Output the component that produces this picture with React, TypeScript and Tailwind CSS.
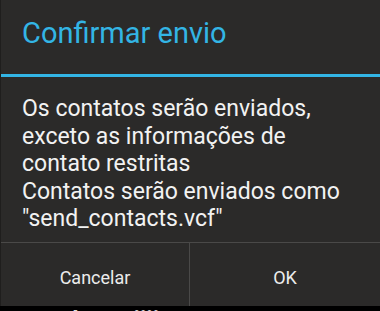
export default function App() {
  return (
    <div
      className="w-[380px] h-[311px] bg-black overflow-hidden flex flex-col"
      style={{ fontFamily: "Roboto, 'Noto Sans', sans-serif" }}
    >
      <div className="h-[306px] shrink-0 bg-[#2b2a29] border-l border-[#1f1e1d] flex flex-col">
        <div className="h-[74px] pl-[21px] pt-[19px]">
          <h1 className="text-[29px] leading-none text-[#33b5e5]">Confirmar envio</h1>
        </div>
        <div className="h-[3px] bg-[#33b5e5]" />
        <div className="flex-1 pl-[21px] pt-[18px] text-[23px] leading-[27.5px] text-[#f2f2f2]">
          Os contatos serão enviados,
          <br />
          exceto as informações de
          <br />
          contato restritas
          <br />
          Contatos serão enviados como
          <br />
          "send_contacts.vcf"
        </div>
        <div className="h-[64px] border-t border-[#4a4948] flex">
          <button className="w-[189px] pt-[5px] border-r border-[#4a4948] text-[18px] text-[#ececec]">
            Cancelar
          </button>
          <button className="flex-1 pt-[5px] text-[18px] text-[#ececec]">OK</button>
        </div>
      </div>
      <div className="flex-1 relative">
        <span className="absolute left-[57px] top-[2px] text-[24px] leading-none font-bold text-[#d8d8d8]">
          Phunmiiii
        </span>
      </div>
    </div>
  );
}
